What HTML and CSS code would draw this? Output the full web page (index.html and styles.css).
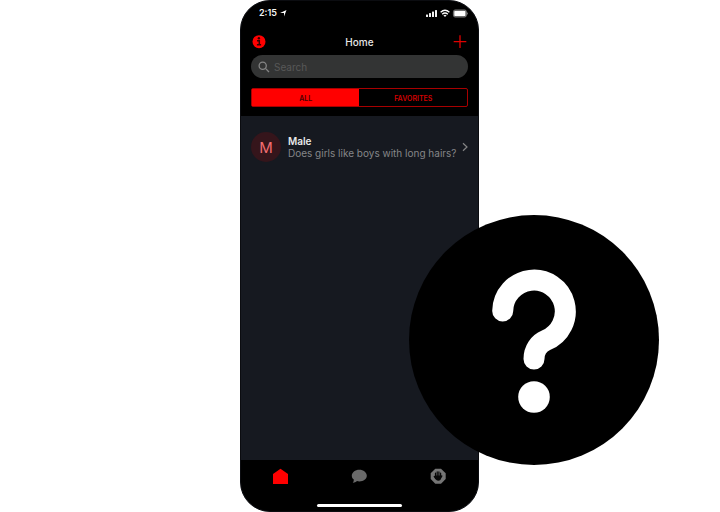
FILE: index.html
```html
<!DOCTYPE html>
<html lang="en">
<head>
<meta charset="utf-8">
<meta name="viewport" content="width=device-width, initial-scale=1">
<title>Home</title>
<link rel="stylesheet" href="styles.css">
</head>
<body>
<div class="phone">
  <header class="top">
    <div class="status">
      <span class="clock">2:15</span>
      <svg class="locate" width="7" height="7" viewBox="0 0 7 7"><path d="M0 3 6.500 0 4 6.500V3z" fill="#fff"/></svg>
      <svg class="signals" width="42" height="10" viewBox="0 0 42 10">
        <g fill="#f2f2f2"><rect y="6.500" width="2" height="2.500" rx=".5"/><rect x="3" y="5" width="2" height="4" rx=".5"/><rect x="6" y="3.500" width="2" height="5.500" rx=".5"/><rect x="9" y="2" width="2" height="7" rx=".5"/></g>
        <g fill="none" stroke="#fff" stroke-width="1.4"><path d="M14.600 4.300Q19 .4 23.400 4.300M16.200 6.300Q19 3.800 21.800 6.300"/></g>
        <path d="M17.400 7.300Q19 6.100 20.600 7.300L19 9z" fill="#f2f2f2"/>
        <rect x="27.400" y="2" width="13" height="7" rx="1.8" fill="none" stroke="#999" stroke-width=".8"/>
        <rect x="28.200" y="2.800" width="11.400" height="5.400" rx="1" fill="#fff"/>
        <path d="M41.100 4.200q1.500 1.200 0 2.600z" fill="#999"/>
      </svg>
    </div>
    <div class="nav">
      <button class="icon-button" aria-label="Information">
        <svg width="14" height="14" viewBox="0 0 14 14"><circle cx="7" cy="6.700" r="6.500" fill="#f00"/><path d="M5 5.700H7.300V9.800M4.900 9.800H9.100" fill="none" stroke="#300" stroke-width="1.500"/><circle cx="6.900" cy="3.300" r="1.200" fill="#300"/></svg>
      </button>
      <h1 class="title">Home</h1>
      <button class="icon-button" aria-label="Add">
        <svg width="14" height="14" viewBox="0 0 14 14"><path d="M.7 6.600H13.300M7 .3V12.900" stroke="#e00000" stroke-width="1.3"/></svg>
      </button>
    </div>
    <label class="search">
      <svg width="12" height="12" viewBox="0 0 12 12" fill="none" stroke="#858585" stroke-width="1.3"><circle cx="4.700" cy="4.700" r="3.600"/><path d="M7.400 7.400 11 11"/></svg>
      <input class="search-input" type="search" placeholder="Search" aria-label="Search">
    </label>
    <div class="segments">
      <button class="segment segment-active">ALL</button>
      <button class="segment">FAVORITES</button>
    </div>
  </header>
  <main class="list">
    <a class="row" href="#male">
      <span class="avatar">M</span>
      <span class="copy"><strong class="name">Male</strong><span class="question">Does girls like boys with long hairs?</span></span>
      <svg class="chevron" width="6" height="10" viewBox="0 0 6 10"><path d="M1 1.200 5 5 1 8.800" fill="none" stroke="#858585" stroke-width="1.2"/></svg>
    </a>
  </main>
  <footer class="bottom">
    <nav class="tabs">
      <a class="tab" href="#home" aria-label="Home"><svg width="16" height="16" viewBox="0 0 16 16"><path d="M1 6 8.500 .700 16 6V16H1z" fill="#f00"/></svg></a>
      <a class="tab" href="#chat" aria-label="Messages"><svg width="16" height="16" viewBox="0 0 16 16"><path d="M8.300 1.700C12.500 1.700 15.800 4.400 15.800 7.700S12.500 13.400 8.300 13.400C7.500 13.400 6.700 13.300 6 13.100 4.800 14.300 3.100 14.900 1.800 14.800 2.600 13.800 2.900 12.700 2.800 11.600 1.500 10.600 .8 9.200 .8 7.700 .8 4.400 4.100 1.700 8.300 1.700z" fill="#6a6a6a"/></svg></a>
      <a class="tab" href="#blocked" aria-label="Blocked"><svg width="16" height="16" viewBox="0 0 16 16"><path d="M5.300 .700H11L15.700 5.300V11L11 15.700H5.300L.7 11V5.300z" fill="#757575"/><path d="M5.500 9V5.200M7.200 8V3.900M8.900 8V3.900M10.600 9V5.200M5.700 10.600 4.200 8.400M10.600 9.800 11.900 7.900" stroke="#080808" stroke-width="1.200" stroke-linecap="round"/><path d="M4.900 7.500H11.300V9.500Q10.800 12.700 8.300 12.700 6 12.700 4.900 9.500z" fill="#080808"/></svg></a>
    </nav>
    <div class="home-bar"></div>
  </footer>
  <svg class="badge" viewBox="0 0 250 250" role="img" aria-label="Question mark">
    <circle cx="125" cy="125" r="125"/>
    <path d="M93.700 96A31.300 31.300 0 1 1 137 125.300C130 128.200 125 135 125 144" fill="none" stroke="#fff" stroke-width="21" stroke-linecap="round"/>
    <circle cx="125" cy="182" r="15.800" fill="#fff"/>
  </svg>
</div>
</body>
</html>
```
FILE: styles.css
```css
* {
  box-sizing: border-box;
}

body {
  margin: 0;
  background: #fff;
  font-family: Inter, "Liberation Sans", sans-serif;
}

button {
  padding: 0;
  border: 0;
  background: none;
  font: inherit;
}

svg {
  display: block;
  flex: none;
}

a {
  color: inherit;
  text-decoration: none;
}

.phone {
  position: relative;
  display: flex;
  flex-direction: column;
  max-width: 239px;
  min-height: 100vh;
  margin-left: 33.3333%;
  border: 1px solid #0b0c10;
  border-radius: 30px;
  background: #161920;
}

.top {
  padding: 6px 10px 9px;
  border-radius: 29px 29px 0 0;
  background: #000;
}

.status {
  display: flex;
  align-items: center;
  height: 12px;
  padding-left: 8px;
}

.clock {
  color: #f4f4f4;
  font-size: 9px;
  font-weight: 600;
  line-height: 12px;
}

.locate {
  margin-left: 3px;
}

.signals {
  margin-left: auto;
}

.nav {
  display: flex;
  align-items: center;
  justify-content: space-between;
  height: 36px;
  padding-top: 10px;
}

.icon-button {
  display: block;
  margin: 0 1px;
}

.title {
  margin: 0;
  color: #e6e6e6;
  font-size: 10px;
  font-weight: 500;
  line-height: 14px;
}

.search {
  display: flex;
  align-items: center;
  gap: 4px;
  height: 23px;
  padding: 0 7px;
  border-radius: 12px;
  background: #333434;
}

.search-input {
  flex: 1;
  min-width: 0;
  padding: 0;
  border: 0;
  outline: 0;
  appearance: none;
  background: none;
  color: #ddd;
  font: 10px/14px Inter, "Liberation Sans", sans-serif;
}

.search-input::placeholder {
  color: #585858;
  opacity: 1;
}

.segments {
  display: flex;
  height: 19px;
  margin-top: 10px;
  border: 1px solid #a80000;
  border-radius: 2px;
}

.segment {
  flex: 1;
  padding-top: 2px;
  color: #d00000;
  font-size: 7px;
  font-weight: 600;
  line-height: 10px;
}

.segment-active {
  background: #f00;
  color: #4a0000;
}

.list {
  flex: 1;
  padding: 16px 10px;
}

.row {
  display: flex;
  align-items: center;
}

.avatar {
  flex: none;
  width: 30px;
  height: 30px;
  border-radius: 50%;
  background: #35151b;
  color: #f26d70;
  font-size: 15px;
  line-height: 31px;
  text-align: center;
}

.copy {
  display: flex;
  flex: 1;
  flex-direction: column;
  margin-left: 7px;
  line-height: 12px;
  white-space: nowrap;
}

.name {
  color: #e8e8e8;
  font-size: 10px;
  font-weight: 600;
}

.question {
  color: #858688;
  font-size: 10px;
}

.bottom {
  padding: 8px 0 4px;
  border-radius: 0 0 29px 29px;
  background: #000;
}

.tabs {
  display: grid;
  grid-template-columns: repeat(3, 1fr);
  height: 36px;
}

.tab {
  justify-self: center;
}

.home-bar {
  width: 36%;
  height: 3px;
  margin: 0 auto;
  border-radius: 2px;
  background: #fff;
}

.badge {
  position: absolute;
  top: 214px;
  left: 168px;
  width: 250px;
  height: 250px;
}
```
